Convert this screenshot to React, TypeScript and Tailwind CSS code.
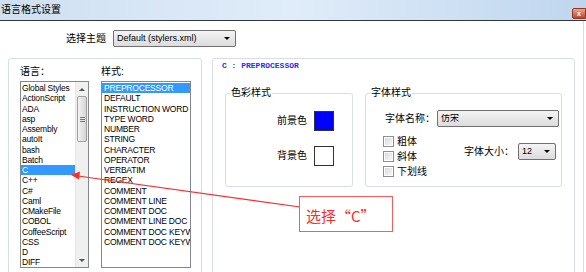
import React from 'react';

const languages = [
  'Global Styles',
  'ActionScript',
  'ADA',
  'asp',
  'Assembly',
  'autoIt',
  'bash',
  'Batch',
  'C',
  'C++',
  'C#',
  'Caml',
  'CMakeFile',
  'COBOL',
  'CoffeeScript',
  'CSS',
  'D',
  'DIFF',
];

const styles = [
  'PREPROCESSOR',
  'DEFAULT',
  'INSTRUCTION WORD',
  'TYPE WORD',
  'NUMBER',
  'STRING',
  'CHARACTER',
  'OPERATOR',
  'VERBATIM',
  'REGEX',
  'COMMENT',
  'COMMENT LINE',
  'COMMENT DOC',
  'COMMENT LINE DOC',
  'COMMENT DOC KEYWORD',
  'COMMENT DOC KEYWORD ERROR',
];

function Combo({ value, className }: { value: string; className: string }) {
  return (
    <div
      className={`flex items-center justify-between rounded-[2px] border border-[#707070] bg-gradient-to-b from-[#f4f4f4] to-[#dcdcdc] pl-[3px] pr-[5px] text-[9px] leading-none ${className}`}
    >
      <span className="truncate">{value}</span>
      <span className="h-0 w-0 border-x-[3px] border-t-[3px] border-x-transparent border-t-black" />
    </div>
  );
}

function Checkbox({ label }: { label: string }) {
  return (
    <div className="flex h-[15px] items-center gap-[3px]">
      <span className="flex h-[11px] w-[11px] items-center justify-center border border-[#8e8f8f] bg-white">
        <span className="h-[7px] w-[7px] bg-gradient-to-br from-[#dcdcdc] to-[#f6f6f6]" />
      </span>
      <span className="text-[10px] leading-none">{label}</span>
    </div>
  );
}

export default function App() {
  return (
    <div className="relative flex h-[272px] w-[586px] flex-col overflow-hidden bg-white font-['Liberation_Sans','Noto_Sans_CJK_SC',sans-serif] text-black">
      {/* Title bar */}
      <div className="flex h-[21px] shrink-0 items-start justify-between border-b border-[#2e3944] bg-gradient-to-r from-[#cfe0f2] via-[#e0ecf9] to-[#bfd6ee]">
        <span className="pl-[1px] pt-[4px] text-[10px] leading-[12px]">语言格式设置</span>
        <span className="mt-[8px] flex h-[11px] w-[14px] items-center justify-center rounded-l-[2px] border border-[#8a3a2a] bg-gradient-to-b from-[#e9a58f] to-[#c2432b] text-[7px] font-bold leading-none text-white">
          x
        </span>
      </div>

      <div className="relative mr-[2px] flex-1 border-r border-[#d8dde2]">
        {/* Theme selector */}
        <div className="mt-[9px] flex h-[17px] items-center gap-[7px] pl-[66px]">
          <span className="text-[10px] leading-none">选择主题</span>
          <Combo value="Default (stylers.xml)" className="h-[17px] w-[123px]" />
        </div>

        <div className="mt-[11px] flex gap-[10px] pl-[8px]">
          {/* Left group: languages + styles */}
          <div className="flex h-[240px] w-[194px] gap-[12px] rounded-[3px] border border-[#d5dfe5] pl-[11px] pt-[7px]">
            <div className="flex w-[69px] flex-col">
              <span className="h-[12px] text-[10px] leading-[12px]">语言：</span>
              <div className="mt-[3px] flex h-[187px] border border-[#828790]">
                <div className="flex-1 pt-[1px]">
                  {languages.map((lang) => (
                    <div
                      key={lang}
                      className={`h-[10.25px] truncate pl-[1px] text-[8.5px] leading-[10.25px] tracking-[-0.2px] ${
                        lang === 'C' ? 'bg-[#3399ff] text-white' : ''
                      }`}
                    >
                      {lang}
                    </div>
                  ))}
                </div>
                <div className="flex w-[13px] flex-col border-l border-[#e6e6e6] bg-[#f0f0f0]">
                  <div className="flex h-[14px] items-center justify-center">
                    <span className="h-0 w-0 border-x-[3px] border-b-[3px] border-x-transparent border-b-[#555]" />
                  </div>
                  <div className="mx-[1px] flex h-[46px] flex-col items-center justify-center gap-[1px] rounded-[2px] border border-[#a0a0a0] bg-gradient-to-r from-[#f2f2f2] to-[#d6d6d6]">
                    <span className="h-px w-[5px] bg-[#777]" />
                    <span className="h-px w-[5px] bg-[#777]" />
                    <span className="h-px w-[5px] bg-[#777]" />
                  </div>
                  <div className="flex-1" />
                  <div className="flex h-[14px] items-center justify-center">
                    <span className="h-0 w-0 border-x-[3px] border-t-[3px] border-x-transparent border-t-[#555]" />
                  </div>
                </div>
              </div>
            </div>

            <div className="flex w-[90px] flex-col">
              <span className="h-[12px] text-[10px] leading-[12px]">样式:</span>
              <div className="mt-[3px] h-[187px] overflow-hidden border border-[#828790] pt-[1px]">
                {styles.map((s) => (
                  <div
                    key={s}
                    className={`h-[10.25px] whitespace-nowrap pl-[2px] text-[8.5px] leading-[10.25px] tracking-[-0.2px] ${
                      s === 'PREPROCESSOR' ? 'bg-[#3399ff] text-white' : ''
                    }`}
                  >
                    {s}
                  </div>
                ))}
              </div>
            </div>
          </div>

          {/* Right group: style details */}
          <div className="flex h-[240px] w-[363px] flex-col rounded-[3px] border border-[#d5dfe5] pl-[9px] pt-[2px]">
            <span className="h-[10px] font-['Liberation_Mono',monospace] text-[8px] font-bold leading-[10px] text-[#2a2aff]">
              C : PREPROCESSOR
            </span>

            <div className="mt-[16px] flex gap-[12px] pl-[3px]">
              <fieldset className="h-[100px] w-[128px] rounded-[3px] border border-[#d5dfe5]">
                <legend className="ml-[4px] px-[1px] text-[10px] leading-[12px]">色彩样式</legend>
                <div className="flex flex-col items-end gap-[15px] pr-[18px] pt-[12px]">
                  <div className="flex items-center gap-[7px]">
                    <span className="text-[10px] leading-none">前景色</span>
                    <span className="h-[20px] w-[20px] border border-[#333] bg-[#0000ff]" />
                  </div>
                  <div className="flex items-center gap-[7px]">
                    <span className="text-[10px] leading-none">背景色</span>
                    <span className="h-[20px] w-[20px] border border-[#333] bg-white" />
                  </div>
                </div>
              </fieldset>

              <fieldset className="h-[100px] w-[197px] rounded-[3px] border border-[#d5dfe5]">
                <legend className="ml-[4px] px-[1px] text-[10px] leading-[12px]">字体样式</legend>
                <div className="flex items-center gap-[2px] pl-[19px] pt-[11px]">
                  <span className="text-[10px] leading-none">字体名称：</span>
                  <Combo value="仿宋" className="h-[17px] w-[122px]" />
                </div>
                <div className="mt-[7px] flex pl-[17px] pr-[5px]">
                  <div className="flex flex-col">
                    <Checkbox label="粗体" />
                    <Checkbox label="斜体" />
                    <Checkbox label="下划线" />
                  </div>
                  <div className="ml-auto mt-[9px] flex h-[17px] items-center gap-[4px]">
                    <span className="text-[10px] leading-none">字体大小：</span>
                    <Combo value="12" className="h-[17px] w-[38px]" />
                  </div>
                </div>
              </fieldset>
            </div>
          </div>
        </div>
      </div>

      {/* Annotation overlay */}
      <svg
        className="pointer-events-none absolute left-0 top-0"
        width={586}
        height={272}
        viewBox="0 0 586 272"
      >
        <line x1={300} y1={207} x2={78} y2={176} stroke="#ff2a2a" strokeWidth={1.2} />
        <polygon points="71,175 80,171.5 79,179.5" fill="#ff2a2a" />
      </svg>
      <div className="absolute left-[299px] top-[196px] flex h-[36px] w-[94px] items-center border border-[#ff5a5a] pl-[6px] pt-[2px]">
        <span className="font-['Noto_Sans_CJK_SC',sans-serif] text-[15px] leading-none text-[#ff2a2a]">选择“C”</span>
      </div>
    </div>
  );
}
